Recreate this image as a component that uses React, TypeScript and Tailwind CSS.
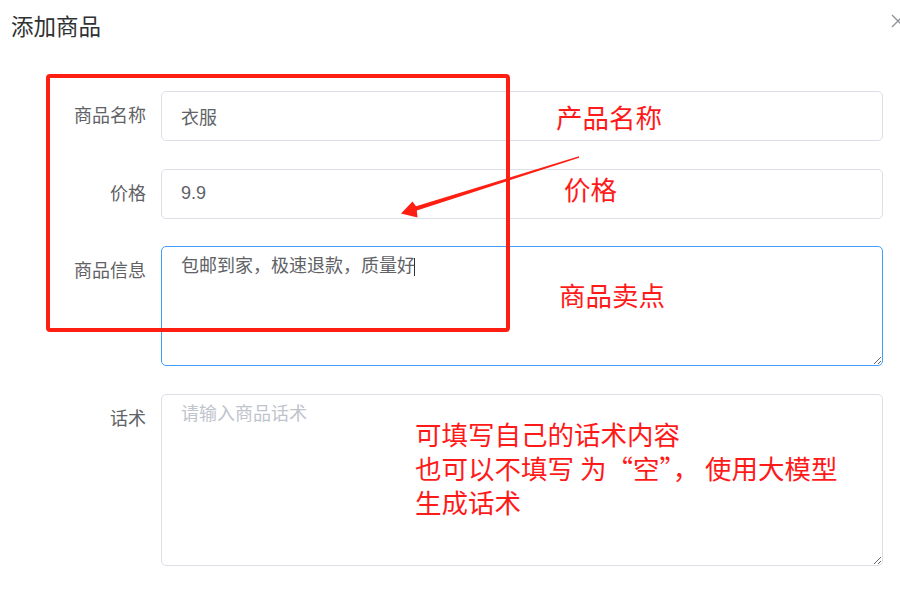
import React from 'react';

const labelCls =
  'w-[125px] shrink-0 pr-[15px] text-right text-[18px] leading-[50px] text-[#606266]';

const Arrow = () => (
  <svg
    className="pointer-events-none absolute left-0 top-0"
    width="900"
    height="592"
    viewBox="0 0 900 592"
  >
    <polygon
      points="579,156.3 416,206.2 412.5,201.5 401,213.5 417.5,217.5 416.8,210.6 579,157.7"
      fill="#ff1e12"
    />
  </svg>
);

const App = () => {
  return (
    <div className="relative h-[592px] w-[900px] overflow-hidden bg-white font-['Liberation_Sans','Noto_Sans_CJK_SC',sans-serif]">
      <div className="h-[91px] pl-[11px] pt-[10px]">
        <h2 className="text-[22.5px] leading-[30px] text-[#303133] font-['Noto_Sans_CJK_SC',sans-serif]">
          添加商品
        </h2>
      </div>
      <svg
        className="absolute left-[891px] top-[14px]"
        width="14"
        height="14"
        viewBox="0 0 14 14"
      >
        <path d="M1 1 L13 13 M13 1 L1 13" stroke="#909399" strokeWidth="1.4" fill="none" />
      </svg>

      <form className="flex flex-col gap-[27.5px] pl-[36px] pr-[17px]">
        <div className="flex">
          <label className={labelCls}>商品名称</label>
          <input
            defaultValue="衣服"
            className="h-[50px] flex-1 rounded-[5px] border border-[#dcdfe6] px-[19px] text-[18px] text-[#606266] outline-none"
          />
        </div>
        <div className="flex">
          <label className={labelCls}>价格</label>
          <input
            defaultValue="9.9"
            className="h-[50px] flex-1 rounded-[5px] border border-[#dcdfe6] px-[19px] text-[18px] text-[#606266] outline-none"
          />
        </div>
        <div className="flex">
          <label className={labelCls}>商品信息</label>
          <div className="relative flex flex-1">
            <textarea
              defaultValue="包邮到家，极速退款，质量好"
              className="h-[120px] flex-1 rounded-[5px] border border-[#409eff] px-[19px] py-[6px] text-[18px] leading-[1.5] text-[#606266] outline-none"
            />
            <span className="absolute left-[253px] top-[12px] h-[18px] w-px bg-[#303133]" />
          </div>
        </div>
        <div className="flex">
          <label className={labelCls}>话术</label>
          <textarea
            placeholder="请输入商品话术"
            className="h-[172px] flex-1 rounded-[5px] border border-[#dcdfe6] px-[19px] py-[6px] text-[18px] leading-[1.5] text-[#606266] outline-none placeholder:text-[#c0c4cc]"
          />
        </div>
      </form>

      {/* annotations */}
      <div className="pointer-events-none absolute left-[46px] top-[74px] h-[258px] w-[464px] rounded-[4px] border-4 border-[#ff1e12]" />
      <Arrow />
      <div className="pointer-events-none font-['Noto_Sans_CJK_SC',sans-serif] text-[26.5px] leading-[26px] text-[#ff1a1a]">
        <span className="absolute left-[556px] top-[104px]">产品名称</span>
        <span className="absolute left-[564px] top-[176px]">价格</span>
        <span className="absolute left-[559px] top-[282px]">商品卖点</span>
        <div className="absolute left-[415px] top-[417px] leading-[34px]">
          <p>可填写自己的话术内容</p>
          <p>也可以不填写 为“空”， 使用大模型</p>
          <p>生成话术</p>
        </div>
      </div>
    </div>
  );
};

export default App;
